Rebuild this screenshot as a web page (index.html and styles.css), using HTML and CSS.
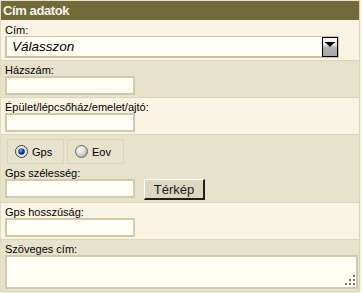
FILE: index.html
```html
<!DOCTYPE html>
<html lang="hu">
<head>
    <meta charset="UTF-8">
    <title>Cím adatok</title>
    <link rel="stylesheet" href="styles.css">
</head>
<body>
    <div class="panel">
        <div class="panel-title">Cím adatok</div>

        <div class="row light">
            <div class="field-label">Cím:</div>
            <div class="select">
                <span class="select-value">Válasszon</span>
                <svg class="select-arrow" width="16" height="20" viewBox="0 0 16 20">
                    <defs>
                        <linearGradient id="arrowBg" x1="0" y1="0" x2="0" y2="1">
                            <stop offset="0" stop-color="#ffffff"/>
                            <stop offset="0.45" stop-color="#d8d8d8"/>
                            <stop offset="0.5" stop-color="#b4b4b4"/>
                            <stop offset="1" stop-color="#a4a4a4"/>
                        </linearGradient>
                    </defs>
                    <rect x="0.5" y="0.5" width="15" height="19" fill="url(#arrowBg)" stroke="#000"/>
                    <rect x="3" y="5" width="10" height="1" fill="#000"/>
                    <polygon points="4,6 12,6 8,10" fill="#000"/>
                </svg>
            </div>
        </div>

        <div class="row dark">
            <div class="field-label">Házszám:</div>
            <input class="text-input" type="text">
        </div>

        <div class="row light">
            <div class="field-label">Épület/lépcsőház/emelet/ajtó:</div>
            <input class="text-input" type="text">
        </div>

        <div class="row dark">
            <div class="radio-group">
                <label class="radio-box">
                    <svg class="radio" width="13" height="13" viewBox="0 0 13 13">
                        <defs>
                            <radialGradient id="dotOn" cx="0.4" cy="0.35" r="0.6">
                                <stop offset="0" stop-color="#7fb4ff"/>
                                <stop offset="0.5" stop-color="#1d4fb0"/>
                                <stop offset="1" stop-color="#0b2460"/>
                            </radialGradient>
                        </defs>
                        <circle cx="6.5" cy="6.5" r="6" fill="#ffffff" stroke="#3a3a3a"/>
                        <circle cx="6.5" cy="6.5" r="4.8" fill="none" stroke="#c8c8c8"/>
                        <circle cx="6.5" cy="6.5" r="3.3" fill="url(#dotOn)"/>
                    </svg>
                    Gps
                </label>
                <label class="radio-box">
                    <svg class="radio" width="13" height="13" viewBox="0 0 13 13">
                        <defs>
                            <radialGradient id="dotOff" cx="0.4" cy="0.35" r="0.7">
                                <stop offset="0" stop-color="#ffffff"/>
                                <stop offset="0.6" stop-color="#d4d4d4"/>
                                <stop offset="1" stop-color="#9a9a9a"/>
                            </radialGradient>
                        </defs>
                        <circle cx="6.5" cy="6.5" r="6" fill="url(#dotOff)" stroke="#6a6a6a"/>
                    </svg>
                    Eov
                </label>
            </div>
            <div class="field-label">Gps szélesség:</div>
            <div class="inline">
                <input class="text-input" type="text">
                <button class="btn" type="button">Térkép</button>
            </div>
        </div>

        <div class="row light">
            <div class="field-label">Gps hosszúság:</div>
            <input class="text-input" type="text">
        </div>

        <div class="row dark last">
            <div class="field-label">Szöveges cím:</div>
            <div class="textarea-wrap">
                <textarea class="text-area"></textarea>
                <svg class="grip" width="10" height="10" viewBox="0 0 10 10">
                    <rect x="8" y="0" width="2" height="2" fill="#7c7a6c"/>
                    <rect x="4" y="4" width="2" height="2" fill="#7c7a6c"/>
                    <rect x="8" y="4" width="2" height="2" fill="#7c7a6c"/>
                    <rect x="0" y="8" width="2" height="2" fill="#7c7a6c"/>
                    <rect x="4" y="8" width="2" height="2" fill="#7c7a6c"/>
                    <rect x="8" y="8" width="2" height="2" fill="#7c7a6c"/>
                </svg>
            </div>
        </div>
    </div>
</body>
</html>
```

FILE: styles.css
```css
* {
    margin: 0;
    padding: 0;
    box-sizing: border-box;
}

body {
    font-family: "Liberation Sans", Arial, sans-serif;
    font-size: 11px;
    color: #000;
    background-color: #f8f3e3;
}

.panel {
    width: 360px;
    border-top: 1px solid #e6e1c9;
    border-left: 1px solid #e0dbc1;
    border-right: 1px solid #d9d4ba;
}

.panel-title {
    height: 19px;
    line-height: 19px;
    padding-left: 2px;
    background-color: #716a3a;
    color: #f6f4e8;
    font-size: 13px;
    font-weight: bold;
    letter-spacing: -0.4px;
}

.row {
    padding: 4px 1px 2px 4px;
    border-bottom: 1px solid #dad5bb;
}

.row.light {
    background-color: #f8f3e3;
}

.row.dark {
    background-color: #e7e2cb;
}

.panel-title + .row {
    padding-top: 5px;
}

.field-label {
    line-height: 11px;
    height: 11px;
}

.text-input {
    display: block;
    width: 130px;
    height: 19px;
    border: 2px solid #cfcaab;
    background-color: #fffff5;
    font-family: inherit;
    font-size: 12px;
    outline: none;
}

.select {
    display: flex;
    align-items: center;
    width: 334px;
    height: 22px;
    border: 1px solid #c9c4a3;
    border-width: 1px 1px 2px 2px;
    background-color: #fffff5;
}

.select-value {
    flex: 1;
    padding-left: 5px;
    font-size: 13.5px;
    font-style: italic;
    color: #000;
}

.select-arrow {
    display: block;
}

.radio-group {
    display: flex;
    gap: 3px;
    margin: 0 0 4px 2px;
}

.radio-box {
    display: flex;
    align-items: center;
    gap: 4px;
    width: 57px;
    height: 25px;
    padding-left: 7px;
    border: 1px solid #d9d4ba;
    font-size: 11px;
}

.radio {
    display: block;
}

.inline {
    display: flex;
    align-items: flex-start;
    gap: 9px;
}

.btn {
    width: 61px;
    height: 21px;
    font-family: inherit;
    font-size: 13px;
    color: #1a1a28;
    background-color: #dcd7be;
    border-style: solid;
    border-width: 1px 2px 2px 1px;
    border-color: #ffffff #1e1e1e #1e1e1e #ffffff;
}

.textarea-wrap {
    position: relative;
}

.text-area {
    display: block;
    width: 353px;
    height: 34px;
    border: 2px solid #cfcaab;
    background-color: #fffff5;
    resize: none;
    outline: none;
}

.grip {
    position: absolute;
    right: 3px;
    bottom: 4px;
}
```
